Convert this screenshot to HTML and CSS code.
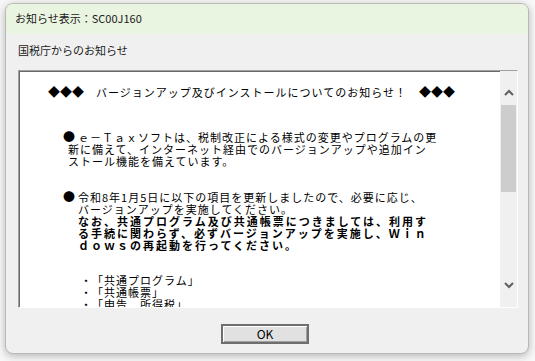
FILE: index.html
```html
<html>
<head>
<title>お知らせ表示</title>
<link rel="stylesheet" href="styles.css">
</head>
<body>
<div class="window">
    <div class="titlebar">お知らせ表示：SC00J160</div>
    <div class="dlgbody">
        <div class="label">国税庁からのお知らせ</div>
        <div class="box">
            <div class="content">
                <p class="heading"><span class="dia">◆◆◆</span>　バージョンアップ及びインストールについてのお知らせ！　<span class="dia">◆◆◆</span></p>
                <p class="item item1"><span class="dot">●</span>ｅ－Ｔａｘソフトは、税制改正による様式の変更やプログラムの更<br>新に備えて、インターネット経由でのバージョンアップや追加イン<br>ストール機能を備えています。</p>
                <p class="item item2"><span class="dot">●</span>令和8年1月5日に以下の項目を更新しましたので、必要に応じ、<br>バージョンアップを実施してください。<br><b>なお、共通プログラム及び共通帳票につきましては、利用す<br>る手続に関わらず、必ずバージョンアップを実施し、Ｗｉｎ<br>ｄｏｗｓの再起動を行ってください。</b></p>
                <p class="list"><span class="mark">・</span>「共通プログラム」<br><span class="mark">・</span>「共通帳票」<br><span class="mark">・</span>「申告　所得税」</p>
            </div>
            <div class="scrollbar">
                <div class="arrow up">
                    <svg width="10" height="7" viewBox="0 0 10 7"><polyline points="1,6 5,2 9,6" fill="none" stroke="#606060" stroke-width="2"/></svg>
                </div>
                <div class="thumb"></div>
                <div class="track"></div>
                <div class="arrow down">
                    <svg width="10" height="7" viewBox="0 0 10 7"><polyline points="1,1 5,5 9,1" fill="none" stroke="#606060" stroke-width="2"/></svg>
                </div>
            </div>
        </div>
        <button class="okbtn">OK</button>
    </div>
</div>
</body>
</html>
```

FILE: styles.css
```css
* {
    box-sizing: border-box;
}
body {
    margin: 0;
    background-color: #f8f8f8;
    font-family: "Noto Sans CJK JP", sans-serif;
}
.window {
    margin: 3px 0 0 5px;
    width: 524px;
    height: 351px;
    border: 1px solid #b9b9b9;
    border-radius: 8px;
    background-color: #f0f0f0;
    box-shadow: 0 2px 8px rgba(0, 0, 0, 0.28);
    overflow: hidden;
    display: flex;
    flex-direction: column;
}
.titlebar {
    height: 30px;
    background-color: #eaf5e1;
    padding-left: 9px;
    font-size: 11px;
    line-height: 29px;
    color: #1a1a1a;
}
.dlgbody {
    flex: 1;
    padding: 0 10px 0 12px;
    display: flex;
    flex-direction: column;
}
.label {
    font-size: 11px;
    line-height: 16px;
    margin-top: 8px;
    color: #1a1a1a;
}
.box {
    height: 238px;
    margin-top: 12px;
    border: 1px solid;
    border-color: #a0a0a0 #ffffff #ffffff #a0a0a0;
    box-shadow: inset 1px 1px 0 #696969;
    background-color: #ffffff;
    display: flex;
}
.content {
    flex: 1;
    overflow: hidden;
    padding-top: 15px;
    font-size: 11px;
    letter-spacing: 1px;
    line-height: 12px;
    white-space: nowrap;
    color: #000000;
}
.content p {
    margin: 0;
}
.heading {
    padding-left: 29px;
}
.dia {
    font-size: 12px;
    letter-spacing: 0;
}
.item1 {
    margin-top: 33px !important;
    padding-left: 49px;
    text-indent: -5px;
}
.item2 {
    margin-top: 24px !important;
    padding-left: 59px;
    text-indent: -15px;
}
.dot {
    display: inline-block;
    width: 15px;
    text-indent: 0;
    letter-spacing: 0;
    font-size: 12px;
}
.item2 b {
    letter-spacing: 2px;
}
.list {
    margin-top: 23px !important;
    padding-left: 61px;
}
.mark {
    display: inline-block;
    width: 12px;
    text-align: center;
    letter-spacing: 0;
}
.scrollbar {
    width: 17px;
    background-color: #f0f0f0;
    display: flex;
    flex-direction: column;
    align-items: center;
}
.arrow {
    width: 17px;
    display: flex;
    justify-content: center;
}
.up {
    height: 34px;
    padding-top: 18px;
}
.thumb {
    width: 15px;
    height: 87px;
    background-color: #cdcdcd;
}
.track {
    flex: 1;
}
.down {
    height: 30px;
    padding-top: 5px;
}
.okbtn {
    align-self: center;
    margin: 16px 6px 0 0;
    width: 88px;
    height: 20px;
    padding: 0;
    border: 2px solid #6e6e6e;
    box-shadow: inset 1px 1px 0 #ffffff, inset -1px -1px 0 #a0a0a0;
    background-color: #e1e1e1;
    font-family: "Noto Sans CJK JP", sans-serif;
    font-size: 12px;
    line-height: 14px;
    color: #000000;
}
.okbtn:focus {
    outline: 0;
}
```
